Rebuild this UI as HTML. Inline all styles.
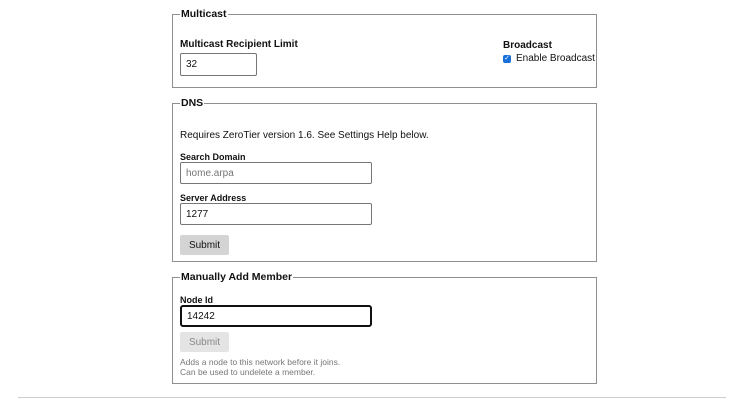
<!DOCTYPE html>
<html><head><style>
*{margin:0;padding:0;box-sizing:border-box}
body{width:741px;height:400px;background:#fff;font-family:"Liberation Sans",sans-serif;font-size:11px;color:#111;position:relative;overflow:hidden}
.a{position:absolute}
.box{position:absolute;border:1px solid #8f8f8f;left:172px;width:425px}
.leg{position:absolute;background:#fff;font-weight:bold;font-size:10.5px;padding:0 1px;left:7px;top:-7px}
.in{position:absolute;border:1px solid #767676;border-radius:2px;background:#fff;padding-left:5px;font-size:10px;display:flex;align-items:center}
.btn{position:absolute;border-radius:2px;font-size:10px;display:flex;align-items:center;justify-content:center}
b{font-size:10px}
</style></head><body>
<div class="box" style="top:14px;height:74px"><span class="leg">Multicast</span></div>
<b class="a" style="left:180px;top:39px">Multicast Recipient Limit</b>
<div class="in" style="left:180px;top:53px;width:77px;height:23px">32</div>
<b class="a" style="left:503px;top:40px">Broadcast</b>
<div class="a" style="left:503px;top:55px;width:8px;height:8px;background:#1a6fd8;border-radius:2px;color:#fff;font-size:7px;line-height:8px;text-align:center">✓</div>
<span class="a" style="left:516px;top:53px;font-size:10px">Enable Broadcast</span>

<div class="box" style="top:103px;height:159px"><span class="leg">DNS</span></div>
<span class="a" style="left:180px;top:130px;font-size:10px">Requires ZeroTier version 1.6. See Settings Help below.</span>
<b class="a" style="left:180px;top:152px;font-size:9px">Search Domain</b>
<div class="in" style="left:180px;top:162px;width:192px;height:22px;color:#777">home.arpa</div>
<b class="a" style="left:180px;top:193px;font-size:9px">Server Address</b>
<div class="in" style="left:180px;top:203px;width:192px;height:22px">1277</div>
<div class="btn" style="left:180px;top:235px;width:49px;height:20px;background:#d4d4d4">Submit</div>

<div class="box" style="top:277px;height:107px"><span class="leg">Manually Add Member</span></div>
<b class="a" style="left:180px;top:295px;font-size:9px">Node Id</b>
<div class="in" style="left:180px;top:305px;width:192px;height:22px;border:2px solid #111;border-radius:3px">14242</div>
<div class="btn" style="left:180px;top:332px;width:49px;height:20px;background:#e4e4e4;color:#888">Submit</div>
<span class="a" style="left:180px;top:357px;font-size:8.5px;color:#777;line-height:10px">Adds a node to this network before it joins.<br>Can be used to undelete a member.</span>
<div class="a" style="left:18px;top:397px;width:708px;height:1px;background:#ccc"></div>
</body></html>
